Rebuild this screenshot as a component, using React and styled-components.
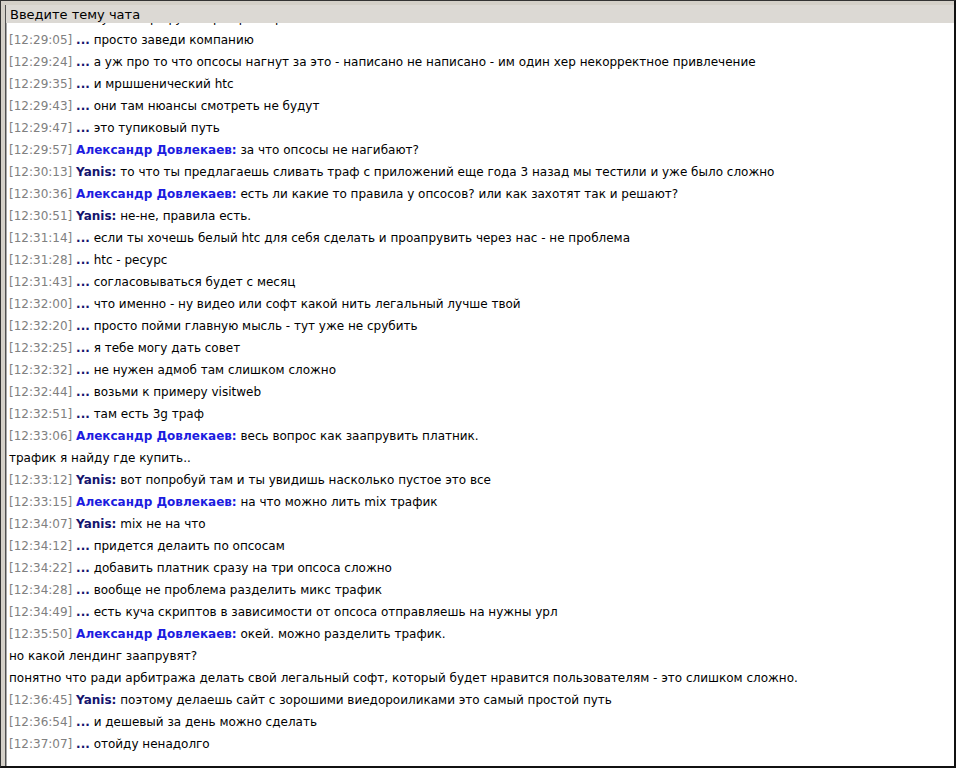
import React from "react";
import styled, { createGlobalStyle } from "styled-components";

const Global = createGlobalStyle`
  html, body { margin: 0; padding: 0; background: #ffffff; }
  body { font-family: "DejaVu Sans", "Liberation Sans", sans-serif; }
`;

const Window = styled.div`
  box-sizing: border-box;
  width: 956px;
  height: 768px;
  display: flex;
  flex-direction: column;
  background: #d4d0c8;
  border-top: 1px solid #333333;
  border-left: 1px solid #333333;
  border-right: 2px solid #111111;
  border-bottom: 2px solid #111111;
  padding: 4px 0 0 4px;
`;

const Panel = styled.div`
  flex: 1;
  min-height: 0;
  display: flex;
  flex-direction: column;
  border-left: 1px solid #505050;
  box-shadow: inset 1px 0 0 #a8a8a8;
`;

const TopicBar = styled.div`
  position: relative;
  z-index: 1;
  height: 18px;
  flex: none;
  display: flex;
  align-items: center;
  padding-left: 4px;
  background: #dcd9d4;
  font-size: 13px;
  color: #000000;
`;

const Log = styled.div`
  flex: 1;
  min-height: 0;
  overflow: hidden;
  display: flex;
  flex-direction: column;
  justify-content: flex-end;
  background: #ffffff;
  margin-left: 1px;
  padding: 0 0 11px 2px;
`;

const Line = styled.div`
  flex: none;
  height: 22px;
  line-height: 22px;
  font-size: 12px;
  color: #000000;
  white-space: nowrap;
`;

const Stamp = styled.span`
  color: #808080;
`;

const Nick = styled.span`
  font-weight: bold;
  color: ${(p) => (p.$tone === "blue" ? "#1c1ce0" : "#14146e")};
`;

const lines = [
  { t: "12:28:59", n: "...", x: "ну и по трафу он прав разберешься" },
  { t: "12:29:05", n: "...", x: "просто заведи компанию" },
  { t: "12:29:24", n: "...", x: "а уж про то что опсосы нагнут за это - написано не написано - им один хер некорректное привлечение" },
  { t: "12:29:35", n: "...", x: "и мршшенический htc" },
  { t: "12:29:43", n: "...", x: "они там нюансы смотреть не будут" },
  { t: "12:29:47", n: "...", x: "это тупиковый путь" },
  { t: "12:29:57", n: "Александр Довлекаев:", b: true, x: "за что опсосы не нагибают?" },
  { t: "12:30:13", n: "Yanis:", x: "то что ты предлагаешь сливать траф с приложений еще года 3 назад мы тестили и уже было сложно" },
  { t: "12:30:36", n: "Александр Довлекаев:", b: true, x: "есть ли какие то правила у опсосов? или как захотят так и решают?" },
  { t: "12:30:51", n: "Yanis:", x: "не-не, правила есть." },
  { t: "12:31:14", n: "...", x: "если ты хочешь белый htc для себя сделать и проапрувить через нас - не проблема" },
  { t: "12:31:28", n: "...", x: "htc - ресурс" },
  { t: "12:31:43", n: "...", x: "согласовываться будет с месяц" },
  { t: "12:32:00", n: "...", x: "что именно - ну видео или софт какой нить легальный лучше твой" },
  { t: "12:32:20", n: "...", x: "просто пойми главную мысль - тут уже не срубить" },
  { t: "12:32:25", n: "...", x: "я тебе могу дать совет" },
  { t: "12:32:32", n: "...", x: "не нужен адмоб там слишком сложно" },
  { t: "12:32:44", n: "...", x: "возьми к примеру visitweb" },
  { t: "12:32:51", n: "...", x: "там есть 3g траф" },
  { t: "12:33:06", n: "Александр Довлекаев:", b: true, x: "весь вопрос как заапрувить платник." },
  { x: "трафик я найду где купить.." },
  { t: "12:33:12", n: "Yanis:", x: "вот попробуй там и ты увидишь насколько пустое это все" },
  { t: "12:33:15", n: "Александр Довлекаев:", b: true, x: "на что можно лить mix трафик" },
  { t: "12:34:07", n: "Yanis:", x: "mix не на что" },
  { t: "12:34:12", n: "...", x: "придется делаить по опсосам" },
  { t: "12:34:22", n: "...", x: "добавить платник сразу на три опсоса сложно" },
  { t: "12:34:28", n: "...", x: "вообще не проблема разделить микс трафик" },
  { t: "12:34:49", n: "...", x: "есть куча скриптов в зависимости от опсоса отправляешь на нужны урл" },
  { t: "12:35:50", n: "Александр Довлекаев:", b: true, x: "окей. можно разделить трафик." },
  { x: "но какой лендинг заапрувят?" },
  { x: "понятно что ради арбитража делать свой легальный софт, который будет нравится пользователям - это слишком сложно." },
  { t: "12:36:45", n: "Yanis:", x: "поэтому делаешь сайт с зорошими виедороиликами это самый простой путь" },
  { t: "12:36:54", n: "...", x: "и дешевый за день можно сделать" },
  { t: "12:37:07", n: "...", x: "отойду ненадолго" },
];

export default function App() {
  return (
    <>
      <Global />
      <Window>
        <Panel>
          <TopicBar>Введите тему чата</TopicBar>
          <Log>
            {lines.map((l, i) => (
              <Line key={i}>
                {l.t && (
                  <>
                    <Stamp>[{l.t}]</Stamp>{" "}
                    <Nick $tone={l.b ? "blue" : "navy"}>{l.n}</Nick>{" "}
                  </>
                )}
                {l.x}
              </Line>
            ))}
          </Log>
        </Panel>
      </Window>
    </>
  );
}
